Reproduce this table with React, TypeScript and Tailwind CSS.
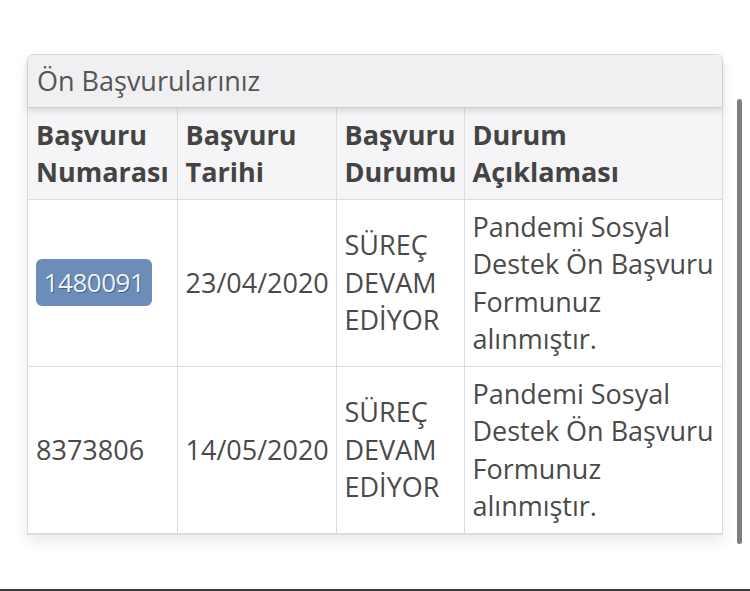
import React from "react";

type Row = {
  no: string;
  date: string;
  highlighted?: boolean;
};

const rows: Row[] = [
  { no: "1480091", date: "23/04/2020", highlighted: true },
  { no: "8373806", date: "14/05/2020" },
];

const cell = "border border-[#dcdcdc] px-[8px] py-[8px] align-middle";

const App = () => {
  return (
    <div
      className="relative flex h-[591px] w-[750px] flex-col overflow-hidden bg-white text-[#4a4a4a]"
      style={{ fontFamily: '"Open Sans", "Noto Sans", sans-serif' }}
    >
      <div className="ml-[27px] mt-[54px] w-[696px] rounded-t-[6px] border border-[#dcdcdc] bg-white shadow-[0_8px_14px_rgba(0,0,0,0.08)]">
        <div className="relative z-10 rounded-t-[6px] border-b border-[#cfcfd2] bg-[#f0f0f2] px-[9px] py-[7px] text-[27px] leading-[37.5px] text-[#555] shadow-[0_3px_6px_rgba(0,0,0,0.12)]">
          Ön Başvurularınız
        </div>
        <table className="w-full table-fixed border-collapse text-[27px] leading-[37.5px]">
          <colgroup>
            <col className="w-[149px]" />
            <col className="w-[159px]" />
            <col className="w-[128px]" />
            <col />
          </colgroup>
          <thead>
            <tr className="bg-[#f5f5f7] text-left font-bold text-[#444]">
              <th className={`${cell} border-t-0 border-l-0`}>
                Başvuru
                <br />
                Numarası
              </th>
              <th className={`${cell} border-t-0`}>
                Başvuru
                <br />
                Tarihi
              </th>
              <th className={`${cell} border-t-0`}>
                Başvuru
                <br />
                Durumu
              </th>
              <th className={`${cell} border-t-0 border-r-0`}>
                Durum
                <br />
                Açıklaması
              </th>
            </tr>
          </thead>
          <tbody>
            {rows.map((r) => (
              <tr key={r.no}>
                <td className={`${cell} border-l-0 whitespace-nowrap`}>
                  {r.highlighted ? (
                    <span className="inline-flex h-[47px] w-[116px] items-center justify-center rounded-[6px] bg-[#6b8db7] text-[26px] tracking-[-0.5px] text-[#eef3f8] [text-shadow:1px_1px_0_rgba(40,60,90,0.6)]">
                      {r.no}
                    </span>
                  ) : (
                    r.no
                  )}
                </td>
                <td className={`${cell} whitespace-nowrap`}>{r.date}</td>
                <td className={cell}>
                  SÜREÇ
                  <br />
                  DEVAM
                  <br />
                  EDİYOR
                </td>
                <td className={`${cell} border-r-0`}>
                  Pandemi Sosyal Destek Ön Başvuru Formunuz alınmıştır.
                </td>
              </tr>
            ))}
          </tbody>
        </table>
      </div>

      <div className="mt-auto h-[2px] w-full bg-[#3a3a3a]" />

      {/* overlay scrollbar */}
      <div className="absolute left-[737px] top-[99px] h-[445px] w-[5px] rounded-full bg-[#7f7f7f]" />
    </div>
  );
};

export default App;
